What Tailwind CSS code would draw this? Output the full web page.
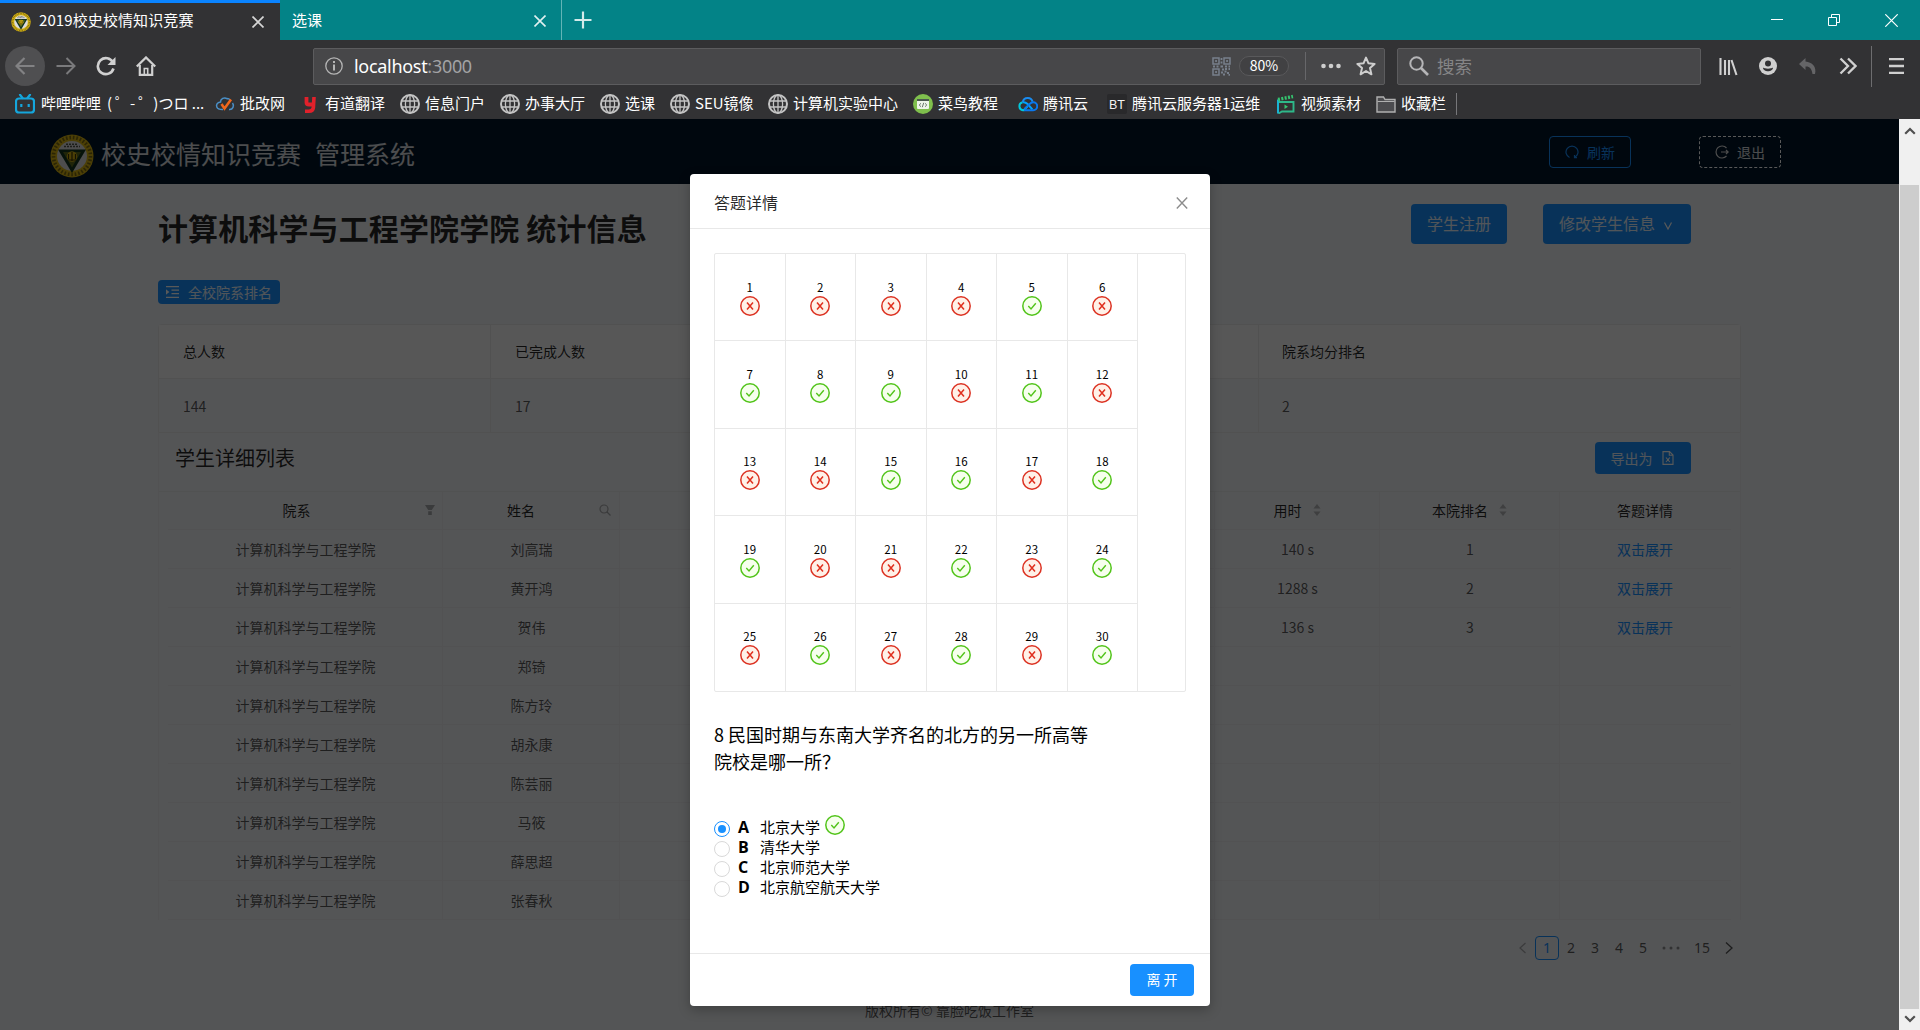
<!DOCTYPE html>
<html lang="zh-CN">
<head>
<meta charset="utf-8">
<title>2019校史校情知识竞赛</title>
<script src="https://cdn.jsdelivr.net/npm/@tailwindcss/browser@4"></script>
</head>
<body class="w-[1920px] h-[1030px] overflow-hidden flex flex-col bg-[#323234] font-['Noto_Sans_CJK_SC',sans-serif]">

<svg class="hidden">
  <symbol id="ok" viewBox="0 0 20 20"><circle cx="10" cy="10" r="9.2" fill="#f6ffed" stroke="#52c41a" stroke-width="1.5"/><path d="M6.3 10.1l2.7 2.9 4.8-5.8" fill="none" stroke="#52c41a" stroke-width="1.4"/></symbol>
  <symbol id="no" viewBox="0 0 20 20"><circle cx="10" cy="10" r="9.2" fill="#fff1e8" stroke="#dc3222" stroke-width="1.5"/><path d="M7 6.400l6 7.200M13 6.400l-6 7.200" fill="none" stroke="#e0301e" stroke-width="1.5"/></symbol>
  <symbol id="globe" viewBox="0 0 20 20"><circle cx="10" cy="10" r="9" fill="none" stroke="#c4c4c4" stroke-width="2"/><ellipse cx="10" cy="10" rx="4.6" ry="9" fill="none" stroke="#c4c4c4" stroke-width="1.3"/><path d="M10 1v18M1.5 7h17M1.5 13h17" stroke="#c4c4c4" stroke-width="1.3"/></symbol>
  <symbol id="seal" viewBox="0 0 44 44"><circle cx="22" cy="22" r="21.5" fill="#d9b412"/><circle cx="22" cy="22" r="18.5" fill="none" stroke="#3d3a12" stroke-width="3.600" stroke-dasharray="1.6 1.9" opacity=".6"/><circle cx="22" cy="22" r="15" fill="#dcdcdc"/><path d="M14 12.500h16M16 10.200h12" stroke="#55584a" stroke-width="1.600" stroke-dasharray="2 1"/><path d="M8 15.500h28L22 39z" fill="#12341f"/><path d="M13 18h18L22 33.500z" fill="#5c6b1c"/><circle cx="22" cy="22.500" r="5.200" fill="#d9b412"/><path d="M22 18v9M18.500 20v5M25.500 20v5M18 26h8" stroke="#3a3407" stroke-width="1.200"/></symbol>
  <symbol id="bili" viewBox="0 0 20 20"><rect x="1" y="4.500" width="18" height="14" rx="3" fill="none" stroke="#15a6dc" stroke-width="2.200"/><path d="M5 .8l2.500 3.200M15 .8l-2.500 3.200" stroke="#15a6dc" stroke-width="2.200" stroke-linecap="round"/><path d="M6.300 10v3M13.700 10v3" stroke="#15a6dc" stroke-width="2.200"/></symbol>
  <symbol id="pigai" viewBox="0 0 20 20"><path d="M12.500 5C9 2.500 5.500 5 5.500 8 2 8.500 1 11 1.800 13 2.500 15 4.500 15.600 8 15.500M14 15.500c4 .5 5.500-4 3.500-6.500M12 4.500c1.500 0 2.500.5 3 1.500" fill="none" stroke="#4a90c8" stroke-width="1.500"/><path d="M6.500 10l3 4.500 6.500-9" fill="none" stroke="#f0671c" stroke-width="2.500"/></symbol>
  <symbol id="youdao" viewBox="0 0 20 20"><path d="M6.500 3v5.500q0 2 2.500 2h4.500" fill="none" stroke="#e1212b" stroke-width="3.800"/><path d="M14 3l-.6 10.500q-.4 3.700-4.400 3.700H5" fill="none" stroke="#e1212b" stroke-width="3.600"/></symbol>
  <symbol id="runoob" viewBox="0 0 20 20"><circle cx="10" cy="10" r="10" fill="#7fbf4d"/><rect x="4" y="5" width="12" height="10" rx="1" fill="#eef5ea"/><path d="M4 5h12v2H4z" fill="#4b5a50"/><path d="M8 9.300L6.200 11 8 12.700M12 9.300l1.800 1.700-1.800 1.700M10.700 8.800l-1.400 4.400" stroke="#5b6a60" fill="none" stroke-width=".9"/></symbol>
  <symbol id="tcloud" viewBox="0 0 20 20"><path d="M9.500 12.500l-3.800 3.700H5A4 4 0 0 1 4.600 8.300" fill="none" stroke="#00c8dc" stroke-width="2"/><path d="M4.600 8.300c2-.6 3.500.3 5 1.700l4.800 5.300" fill="none" stroke="#00a3ff" stroke-width="2"/><path d="M4.800 8A5 5 0 0 1 14.600 7.800" fill="none" stroke="#1a8cf0" stroke-width="2"/><path d="M6 16.200h9.200a4 4 0 0 0 0-8c-1.700 0-2.700.8-3.700 1.900L6.500 15" fill="none" stroke="#0a78ee" stroke-width="2"/></symbol>
  <symbol id="bt" viewBox="0 0 20 20"><rect width="20" height="20" rx="2" fill="#29292b"/><text x="10" y="14.500" font-size="12.500" fill="#f2f2f2" text-anchor="middle" font-family="Liberation Sans, sans-serif">BT</text></symbol>
  <symbol id="video" viewBox="0 0 20 20"><path d="M2 8h15.500v9.500H6L2.500 19.500" fill="none" stroke="#2eb889" stroke-width="1.900"/><path d="M2 19.500V5.500" stroke="#19b3d3" stroke-width="2"/><path d="M2 5.500l15-3" stroke="#35c46f" stroke-width="3.400" stroke-dasharray="2 1.400"/><path d="M8.500 10.500v4.400l3.500-2.200z" fill="#35c46f"/></symbol>
  <symbol id="folder" viewBox="0 0 20 20"><path d="M1 18V3h6.500l1.500 2.500h10V18z" fill="#4c4c4f" stroke="#b0b0b0" stroke-width="1.400"/><path d="M1.500 7.500h17" stroke="#b0b0b0" stroke-width="1"/></symbol>
</svg>

<!-- tab strip -->
<div class="h-10 shrink-0 flex bg-[#038387] text-white text-[15px]">
  <div class="w-[280px] flex items-center border-t-[3px] border-[#0a84ff] bg-[#323234] pl-[11px] pr-4">
    <svg class="size-5 mr-2"><use href="#seal"/></svg>
    <span class="flex-1 whitespace-nowrap leading-5 -mt-[3px] tracking-[0.1px]">2019校史校情知识竞赛</span>
    <svg class="size-3" viewBox="0 0 12 12"><path d="M.5.5l11 11M11.500.5l-11 11" stroke="#d6d6d6" stroke-width="1.700"/></svg>
  </div>
  <div class="w-[282px] flex items-center border-r border-[#63b4b6] pl-3 pr-[15px]">
    <span class="flex-1 leading-5 -mt-px">选课</span>
    <svg class="size-3 mt-px" viewBox="0 0 12 12"><path d="M.5.5l11 11M11.500.5l-11 11" stroke="#e0f0f0" stroke-width="1.600"/></svg>
  </div>
  <div class="flex-1 flex items-center pl-3">
    <svg class="size-[18px]" viewBox="0 0 18 18"><path d="M9 .5v17M.5 9h17" stroke="#d3eaea" stroke-width="2.200"/></svg>
  </div>
  <div class="flex items-center gap-[45px] pr-[22px]">
    <svg class="size-3" viewBox="0 0 12 12"><path d="M0 5.500h12" stroke="#fff"/></svg>
    <svg class="size-3" viewBox="0 0 12 12"><path d="M.5 3.500h8v8h-8zM3.500 3.500v-3h8v8h-3" fill="none" stroke="#fff"/></svg>
    <svg class="size-[13px]" viewBox="0 0 13 13"><path d="M.3.3l12.400 12.400M12.700.3L.3 12.700" stroke="#fff" stroke-width="1.200"/></svg>
  </div>
</div>

<!-- toolbar -->
<div class="h-[49px] shrink-0 flex items-center pl-[5px] pt-[3px]">
  <div class="w-10 h-10 rounded-full bg-[#4f4f51] flex items-center justify-center"><svg class="size-5" viewBox="0 0 20 20"><path d="M19.500 10H1.500M9.500 2l-8 8 8 8" fill="none" stroke="#828284" stroke-width="2.200"/></svg></div>
  <svg class="size-5 ml-[11px]" viewBox="0 0 20 20"><path d="M.5 10h18M10.500 2l8 8-8 8" fill="none" stroke="#7a7a7c" stroke-width="2"/></svg>
  <svg class="size-5 ml-5" viewBox="0 0 20 20"><path d="M17 6.500A8 8 0 1 0 17.500 12.500" fill="none" stroke="#d0d0d0" stroke-width="2.600"/><path d="M19.500 1v8h-8z" fill="#d0d0d0"/></svg>
  <svg class="size-5 ml-5" viewBox="0 0 20 20"><path d="M.8 10.500L10 1.500l9.200 9" fill="none" stroke="#d0d0d0" stroke-width="2.300"/><path d="M3.800 9v9.800h12.400V9" fill="none" stroke="#d0d0d0" stroke-width="2.200"/><path d="M8.300 18.500v-6h3.400v6" fill="none" stroke="#d0d0d0" stroke-width="1.600"/></svg>
  <div class="ml-[157px] w-[1072px] h-[37px] bg-[#474749] border border-[#5c5c5e] rounded-[2px] flex items-center pl-[11px] pr-2">
    <svg class="size-[18px]" viewBox="0 0 18 18"><circle cx="9" cy="9" r="8.200" fill="none" stroke="#b5b5b5" stroke-width="1.300"/><path d="M9 7.500v6M9 4v2" stroke="#b5b5b5" stroke-width="2"/></svg>
    <span class="ml-[11px] flex-1 text-[18px] leading-6 text-white font-['Noto_Sans',sans-serif] tracking-[-0.3px]">localhost<span class="text-[#a2a2a4]">:3000</span></span>
    <svg class="size-[19px]" viewBox="0 0 19 19"><g fill="none" stroke="#78808c" stroke-width="1.500"><path d="M1 1h6v6H1zM12 1h6v6h-6zM1 12h6v6H1z"/></g><path d="M3.200 4h1.700M14.200 4h1.700M3.200 15h1.700M9.500 1v2M9.500 4.500v2M8.500 9.500h2.500M1 9.500h2M4.500 9.500h2M13 9.500h2M16.500 9.500H18M10 12.500h2M13 12h2M16.500 12h1.500M9 15.500h2M12.500 14.500h2M15 16h2M11 17.500h2M16.500 17.800h1.500" stroke="#78808c" stroke-width="1.800"/></svg>
    <span class="ml-2 w-[50px] h-5 rounded-full border border-[#59595b] bg-[#414143] text-white text-sm leading-[17px] text-center">80%</span>
    <span class="ml-4 w-px h-7 bg-[#67676a]"></span>
    <svg class="ml-[15px] w-5 h-5" viewBox="0 0 20 20" fill="#cecece"><circle cx="2.500" cy="10" r="2.300"/><circle cx="10" cy="10" r="2.300"/><circle cx="17.500" cy="10" r="2.300"/></svg>
    <svg class="ml-[15px] size-5" viewBox="0 0 20 20"><path d="M10 1.600l2.500 5.700 6.100.6-4.600 4.200 1.400 6.200L10 15l-5.400 3.300L6 12.100 1.400 7.900l6.100-.6z" fill="none" stroke="#cecece" stroke-width="2" stroke-linejoin="round"/></svg>
  </div>
  <div class="ml-3 w-[304px] h-[37px] bg-[#474749] border border-[#5c5c5e] rounded-[2px] flex items-center pl-[11px]">
    <svg class="size-5" viewBox="0 0 20 20"><circle cx="7.500" cy="7.500" r="6.200" fill="none" stroke="#b5b5b7" stroke-width="2"/><path d="M12 12l7 7" stroke="#b5b5b7" stroke-width="2.600"/></svg>
    <span class="ml-2 text-[17.500px] leading-6 text-[#858587]">搜索</span>
  </div>
  <div class="flex items-center ml-[18px]">
    <svg class="size-[19px]" viewBox="0 0 19 19"><path d="M1.500 1v17M6 3v15M10 3v15M12.500 3l5 15" stroke="#d0d0d0" stroke-width="2.100"/></svg>
    <svg class="size-[18px] ml-[21px]" viewBox="0 0 18 18"><circle cx="9" cy="9" r="9" fill="#d0d0d0"/><circle cx="9" cy="6.500" r="3" fill="#323234"/><path d="M4 10.500c1.500 1.500 8.500 1.500 10 0 0 5-10 5-10 0z" fill="#323234"/></svg>
    <svg class="size-[18px] ml-[22px]" viewBox="0 0 18 18"><path d="M6.500 1L0 7l6.500 6V9.500c4-.3 6 1.500 7 7.500h2.500C18 10 13 5 6.500 4.500z" fill="#656567"/></svg>
    <svg class="size-[18px] ml-[22px]" viewBox="0 0 18 18"><path d="M1.500 1.500L9 9l-7.500 7.500M9 1.500L16.500 9 9 16.500" fill="none" stroke="#d0d0d0" stroke-width="2.300"/></svg>
    <span class="w-px h-[41px] ml-[14px] bg-[#6d6d6f]"></span>
    <svg class="w-[15px] h-4 ml-[17px]" viewBox="0 0 15 16"><path d="M0 1.200h15M0 8h15M0 14.800h15" stroke="#d0d0d0" stroke-width="2.300"/></svg>
  </div>
</div>

<!-- bookmarks -->
<div class="h-[30px] shrink-0 flex items-center pl-[15px] text-white text-[15px] leading-5" id="bookmarks"></div>

<!-- viewport -->
<div class="flex-1 flex min-h-0">
  <div class="relative w-[1899px] h-[911px] overflow-hidden bg-[#f0f2f5] text-sm text-black/65">
    <header class="h-[65px] bg-[#001529] flex items-center pl-[50px] pt-px">
      <svg class="size-11 mt-2"><use href="#seal"/></svg>
      <span class="ml-[7px] w-[1448px] text-[25px] leading-8 mt-px text-white/85 flex gap-[14px]"><span>校史校情知识竞赛</span><span>管理系统</span></span>
      <div class="w-[82px] h-8 rounded border border-[#1890ff] text-[#1890ff] flex items-center justify-center gap-2">
        <svg class="w-[14px] h-[14px]" viewBox="0 0 14 14"><path d="M4.500 12.500A6 6 0 1 1 9.500 12.500M9.500 10v2.600h2.500" fill="none" stroke="#1890ff" stroke-width="1.200"/></svg>刷新</div>
      <div class="ml-[68px] w-[82px] h-8 rounded border border-dashed border-white text-white/85 flex items-center justify-center gap-2">
        <svg class="w-[14px] h-[14px]" viewBox="0 0 14 14"><path d="M11.500 3A6 6 0 1 0 11.500 11M6 7h7M11 5l2.200 2L11 9" fill="none" stroke="#ddd" stroke-width="1.200"/></svg>退出</div>
    </header>

    <div class="pl-[158px] w-[1741px]">
      <div class="flex h-[96px] pt-5 text-base text-white/90">
        <h1 class="w-[1253px] text-[30px] leading-10 mt-[3px] tracking-[0.12px] font-bold text-black/85">计算机科学与工程学院学院 统计信息</h1>
        <div class="w-24 h-10 rounded bg-[#1890ff] flex items-center justify-center shrink-0 pb-[2px]">学生注册</div>
        <div class="ml-9 w-[148px] h-10 rounded bg-[#1890ff] flex items-center justify-center gap-2 shrink-0 pb-[2px] pr-[2px]">修改学生信息<svg class="w-[10px] h-[10px] mt-[6px]" viewBox="0 0 10 10"><path d="M1.500 1.500L5 8l3.500-6.500" fill="none" stroke="#fff" stroke-width="1.200"/></svg></div>
      </div>
      <div class="w-[122px] h-6 rounded bg-[#1890ff] text-white/90 flex items-center pl-[8px] gap-[9px]">
        <svg class="w-[13px] h-3" viewBox="0 0 13 12"><path d="M0 .7h13M5.500 4.200H13M5.500 7.700H13M0 11.300h13" stroke="#fff" stroke-width="1.200"/><path d="M0 3.300v5.400L3.300 6z" fill="#fff"/></svg><span class="leading-5">全校院系排名</span>
      </div>

      <!-- summary -->
      <div class="mt-5 w-[1583px] border border-[#e8e8e8] rounded-t">
        <div class="grid grid-cols-[332px_383px_385px_1fr] h-[54px] bg-[#fafafa] border-b border-[#e8e8e8] text-black/85 items-stretch">
          <div class="border-r border-[#e8e8e8] pl-6 flex items-center pb-px">总人数</div><div class="border-r border-[#e8e8e8] pl-6 flex items-center pb-px">已完成人数</div><div class="border-r border-[#e8e8e8] pl-6 flex items-center pb-px">院系平均分</div><div class="pl-[23px] flex items-center pb-px">院系均分排名</div>
        </div>
        <div class="grid grid-cols-[332px_383px_385px_1fr] h-[53px]">
          <div class="border-r border-[#e8e8e8] pl-6 flex items-center">144</div><div class="border-r border-[#e8e8e8] pl-6 flex items-center">17</div><div class="border-r border-[#e8e8e8] pl-6 flex items-center">43</div><div class="pl-[23px] flex items-center">2</div>
        </div>
      </div>

      <!-- student list -->
      <div class="w-[1583px] border-x border-[#ebecee]">
        <div class="h-[58px] flex pt-[9px] pl-[16px]">
          <span class="w-[1420px] text-[20px] leading-8 text-black/85">学生详细列表</span>
          <div class="w-24 h-8 rounded bg-[#1890ff] text-white/90 flex items-center justify-center gap-[9px] pr-[2px]">导出为<svg class="w-3 h-[14px]" viewBox="0 0 12 14"><path d="M1 .6h6.500L11 4v9.400H1zM7.300.8v3.500h3.500M4 6.500l3.800 4.500M7.800 6.500L4 11" fill="none" stroke="#fff" stroke-width="1.100"/></svg></div>
        </div>
        <div class="border-t border-[#e9eaec] px-[9px]">
          <div id="thead" class="grid grid-cols-[275px_177px_188px_203px_204px_165px_180px_1fr] h-[38px] border-b border-[#ebecee] text-black/85"></div>
          <div id="tbody"></div>
        </div>
      </div>

      <div class="flex items-center h-6 mt-[16px] pl-[1359px] font-['Noto_Sans',sans-serif]">
        <svg class="w-3 h-3" viewBox="0 0 12 12"><path d="M8.500 1L3 6l5.500 5" fill="none" stroke="#000" stroke-opacity=".3" stroke-width="1.200"/></svg>
        <span class="ml-[6px] w-6 h-6 rounded border border-[#1890ff] text-[#1890ff] text-center leading-[22px]">1</span>
        <span class="w-6 text-center">2</span><span class="w-6 text-center">3</span><span class="w-6 text-center">4</span><span class="w-6 text-center">5</span>
        <svg class="ml-[7px] w-[18px] h-1" viewBox="0 0 18 4" fill="#000" fill-opacity=".4"><circle cx="2" cy="2" r="1.500"/><circle cx="9" cy="2" r="1.500"/><circle cx="16" cy="2" r="1.500"/></svg>
        <span class="ml-[10px] w-6 text-center">15</span>
        <svg class="ml-[9px] w-3 h-3" viewBox="0 0 12 12"><path d="M3 .5L9 6l-6 5.500" fill="none" stroke="#000" stroke-opacity=".65" stroke-width="1.300"/></svg>
      </div>
      <div class="mt-[39px] w-[1583px] text-center leading-[22px]">版权所有© 靠脸吃饭工作室</div>
    </div>

    <!-- dialog -->
    <div class="absolute inset-0 bg-black/65"></div>
    <div class="absolute left-[690px] top-[55px] w-[520px] h-[832px] bg-white rounded shadow-[0_4px_12px_rgba(0,0,0,0.25)] flex flex-col text-black">
      <div class="h-[55px] flex items-center justify-between border-b border-[#e8e8e8] px-6">
        <span class="text-base leading-6 text-black/85 mt-[2px]">答题详情</span>
        <svg class="size-3 -mr-[2px] mt-1" viewBox="0 0 12 12"><path d="M.8.500l10.400 11M11.200.5L.8 11.500" stroke="#8c8c8c" stroke-width="1.400"/></svg>
      </div>
      <div class="ml-6 mt-6 w-[472px] h-[439px] border border-[#e8e8e8] rounded-[2px]">
        <div id="answers" class="w-[423px] h-[437px] grid grid-cols-6 grid-rows-5"></div>
      </div>
      <p class="ml-6 mt-[30px] w-[380px] text-[18px] leading-[27px] -translate-y-px">8 民国时期与东南大学齐名的北方的另一所高等院校是哪一所？</p>
      <div id="options" class="ml-6 mt-[41px] flex-1 text-[15px]"></div>
      <div class="h-[53px] border-t border-[#e8e8e8] flex items-center justify-end pr-4">
        <button class="w-16 h-8 rounded bg-[#1890ff] text-white text-sm pb-[2px]">离 开</button>
      </div>
    </div>
  </div>

  <!-- scrollbar -->
  <div class="w-[21px] bg-[#f0f0f0] flex flex-col items-center pt-2">
    <svg class="w-3 h-2" viewBox="0 0 12 8"><path d="M1.200 6.800L6 2l4.800 4.800" fill="none" stroke="#505050" stroke-width="2.200"/></svg>
    <div class="mt-[50px] w-[19px] h-[824px] bg-[#cdcdcd]"></div>
    <svg class="w-3 h-2 mt-[6px]" viewBox="0 0 12 8"><path d="M1.200 1.200L6 6l4.800-4.800" fill="none" stroke="#505050" stroke-width="2.200"/></svg>
  </div>
</div>

<script>
const bookmarks = [
  ['bili', '<span class="ml-px">哔哩哔哩</span><span class="ml-[6px]">(&thinsp;゜-&thinsp;゜)</span><span>つロ ...</span>', 200], ['pigai', '批改网', 85], ['youdao', '有道翻译', 100], ['globe', '信息门户', 100],
  ['globe', '办事大厅', 100], ['globe', '选课', 70], ['globe', 'SEU镜像', 98], ['globe', '计算机实验中心', 145],
  ['runoob', '菜鸟教程', 105], ['tcloud', '腾讯云', 89], ['bt', '腾讯云服务器1运维', 169], ['video', '视频素材', 100], ['folder', '收藏栏', 80]
];
document.getElementById('bookmarks').innerHTML = bookmarks.map(([i, t, w]) =>
  `<div class="flex items-center gap-[5px] shrink-0 whitespace-nowrap" style="width:${w}px"><svg class="size-5 shrink-0"><use href="#${i}"/></svg><span class="leading-5 -mt-[3px]">${t}</span></div>`
).join('') + '<span class="w-px h-[22px] bg-[#77777a]"></span>';

const filter = '<svg class="w-[10px] h-[10px] -mr-px" viewBox="0 0 10 10" fill="#000" fill-opacity=".3"><path d="M0 0h10L6.800 5H3.200zM3.200 6.200h3.600V10H3.200z"/></svg>';
const search = '<svg class="w-3 h-3" viewBox="0 0 12 12" fill="none" stroke="#000" stroke-opacity=".3" stroke-width="1.200"><circle cx="5" cy="5" r="4"/><path d="M8 8l3.500 3.500"/></svg>';
const sorter = '<svg class="w-2 h-3 ml-[11px]" viewBox="0 0 8 12" fill="#000" fill-opacity=".25"><path d="M4 0l3.500 4.500h-7zM4 12L.5 7.500h7z"/></svg>';
const wide = (t, icon) => `<div class="border-r border-[#ebecee] flex items-center pr-2 pb-[2px]"><span class="flex-1 text-center">${t}</span>${icon}</div>`;
const sorted = t => `<div class="border-r border-[#ebecee] flex items-center justify-center pb-[2px]">${t}${sorter}</div>`;
document.getElementById('thead').innerHTML = wide('院系', filter) + wide('姓名', search) + sorted('学号') + sorted('得分') + sorted('状态')
  + sorted('用时') + sorted('本院排名') + '<div class="flex items-center justify-center pb-[2px] pr-px">答题详情</div>';

const students = [
  ['刘高瑞', '140 s', '1'], ['黄开鸿', '1288 s', '2'], ['贺伟', '136 s', '3'], ['郑锜'], ['陈方玲'],
  ['胡永康'], ['陈芸丽'], ['马筱'], ['薛思超'], ['张春秋']
];
const cell = t => `<div class="border-r border-[#ebecee] flex items-center justify-center pb-px pl-px">${t || ''}</div>`;
document.getElementById('tbody').innerHTML = students.map(([n, s, r]) =>
  `<div class="grid grid-cols-[275px_177px_188px_203px_204px_165px_180px_1fr] h-[39px] border-b border-[#ebecee]">${cell('计算机科学与工程学院')}${cell(n)}${cell()}${cell()}${cell()}${cell(s)}${cell(r)}<div class="flex items-center justify-center pb-px pr-px text-[#1890ff]">${r ? '双击展开' : ''}</div></div>`
).join('');

const right = new Set([5, 7, 8, 9, 11, 15, 16, 18, 19, 22, 24, 26, 28, 30]);
document.getElementById('answers').innerHTML = Array.from({ length: 30 }, (_, k) => k + 1).map(n =>
  `<div class="border-r ${n < 25 ? 'border-b' : ''} border-[#e8e8e8] flex flex-col items-center pt-[24.500px]"><span class="h-[17px] text-[11.500px] leading-[17px]">${n}</span><svg class="size-5"><use href="#${right.has(n) ? 'ok' : 'no'}"/></svg></div>`
).join('');

const options = [['A', '北京大学'], ['B', '清华大学'], ['C', '北京师范大学'], ['D', '北京航空航天大学']];
document.getElementById('options').innerHTML = options.map(([l, t], k) =>
  `<div class="h-5 flex items-center"><span class="mt-[3px] w-4 h-4 rounded-full border ${k ? 'border-[#d9d9d9]' : 'border-[#1890ff]'} flex items-center justify-center">${k ? '' : '<i class="w-2 h-2 rounded-full bg-[#1890ff]"></i>'}</span><b class="ml-2 w-[22px] text-base font-['Open_Sans',sans-serif] leading-5">${l}</b><span class="leading-5">${t}</span>${k ? '' : '<svg class="size-5 ml-[5px] -mt-[5px]"><use href="#ok"/></svg>'}</div>`
).join('');
</script>
</body>
</html>
